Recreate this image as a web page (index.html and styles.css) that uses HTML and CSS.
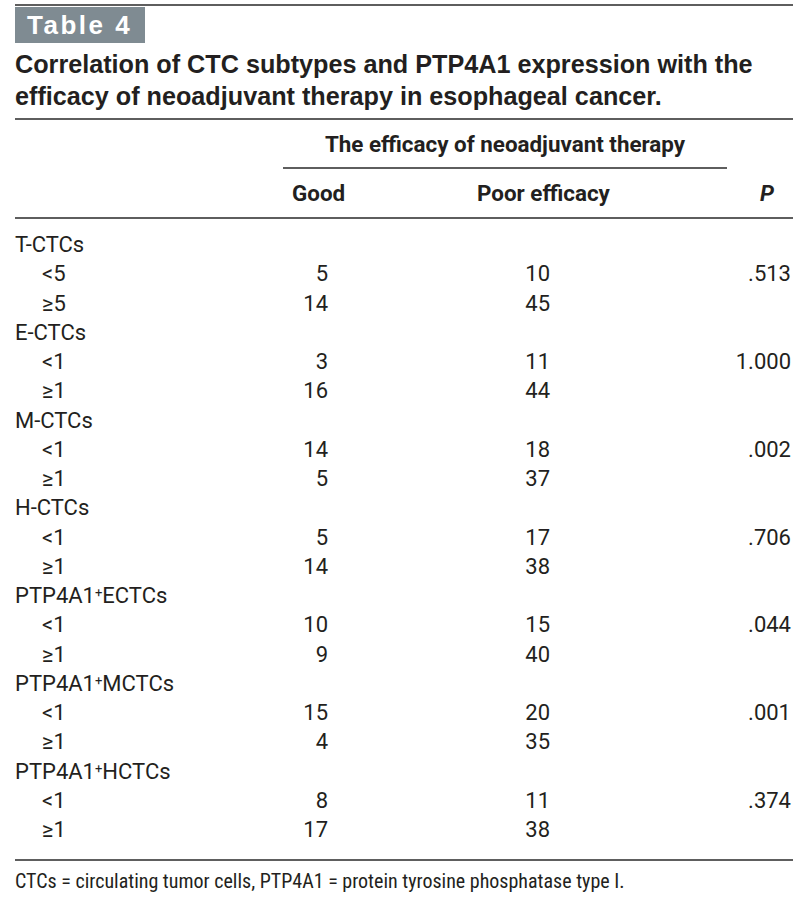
FILE: index.html
```html
<!DOCTYPE html>
<html>
<head>
<meta charset="utf-8">
<link rel="stylesheet" href="styles.css">
</head>
<body>
<div class="wrap">
  <div class="topline"></div>
  <div class="label"><span>Table 4</span></div>
  <h1 class="title">Correlation of CTC subtypes and PTP4A1 expression with the efficacy of neoadjuvant therapy in esophageal cancer.</h1>
  <table class="tbl">
    <colgroup>
      <col class="c1"><col class="c2"><col class="c3"><col class="c4">
    </colgroup>
    <thead>
      <tr class="h1">
        <th></th>
        <th colspan="2" class="span">The efficacy of neoadjuvant therapy</th>
        <th></th>
      </tr>
      <tr class="h2">
        <th></th>
        <th class="hg">Good</th>
        <th class="hp">Poor efficacy</th>
        <th class="hP"><i>P</i></th>
      </tr>
    </thead>
    <tbody>
      <tr><td class="grp">T-CTCs</td><td></td><td></td><td></td></tr>
      <tr><td class="sub">&lt;5</td><td class="ng">5</td><td class="np">10</td><td class="nP">.513</td></tr>
      <tr><td class="sub">≥5</td><td class="ng">14</td><td class="np">45</td><td class="nP"></td></tr>
      <tr><td class="grp">E-CTCs</td><td></td><td></td><td></td></tr>
      <tr><td class="sub">&lt;1</td><td class="ng">3</td><td class="np">11</td><td class="nP">1.000</td></tr>
      <tr><td class="sub">≥1</td><td class="ng">16</td><td class="np">44</td><td class="nP"></td></tr>
      <tr><td class="grp">M-CTCs</td><td></td><td></td><td></td></tr>
      <tr><td class="sub">&lt;1</td><td class="ng">14</td><td class="np">18</td><td class="nP">.002</td></tr>
      <tr><td class="sub">≥1</td><td class="ng">5</td><td class="np">37</td><td class="nP"></td></tr>
      <tr><td class="grp">H-CTCs</td><td></td><td></td><td></td></tr>
      <tr><td class="sub">&lt;1</td><td class="ng">5</td><td class="np">17</td><td class="nP">.706</td></tr>
      <tr><td class="sub">≥1</td><td class="ng">14</td><td class="np">38</td><td class="nP"></td></tr>
      <tr><td class="grp">PTP4A1<sup>+</sup>ECTCs</td><td></td><td></td><td></td></tr>
      <tr><td class="sub">&lt;1</td><td class="ng">10</td><td class="np">15</td><td class="nP">.044</td></tr>
      <tr><td class="sub">≥1</td><td class="ng">9</td><td class="np">40</td><td class="nP"></td></tr>
      <tr><td class="grp">PTP4A1<sup>+</sup>MCTCs</td><td></td><td></td><td></td></tr>
      <tr><td class="sub">&lt;1</td><td class="ng">15</td><td class="np">20</td><td class="nP">.001</td></tr>
      <tr><td class="sub">≥1</td><td class="ng">4</td><td class="np">35</td><td class="nP"></td></tr>
      <tr><td class="grp">PTP4A1<sup>+</sup>HCTCs</td><td></td><td></td><td></td></tr>
      <tr><td class="sub">&lt;1</td><td class="ng">8</td><td class="np">11</td><td class="nP">.374</td></tr>
      <tr class="last"><td class="sub">≥1</td><td class="ng">17</td><td class="np">38</td><td class="nP"></td></tr>
    </tbody>
  </table>
  <p class="foot">CTCs = circulating tumor cells, PTP4A1 = protein tyrosine phosphatase type I.</p>
</div>
</body>
</html>
```

FILE: styles.css
```css
html, body {
  margin: 0;
  padding: 0;
  background: #ffffff;
}
body {
  color: #231f20;
  font-family: "Roboto", "Liberation Sans", Arial, sans-serif;
  font-stretch: 90%;
}
.wrap {
  width: 778px;
  margin-left: 15px;
  padding-top: 4px;
}
.topline {
  height: 2px;
  background: #5e5e5e;
}
.label {
  margin-top: 1px;
  width: 130px;
  height: 36px;
  background: #7f8b92;
  box-sizing: border-box;
  padding-left: 12px;
  display: flex;
  align-items: center;
}
.label span {
  font-family: "Liberation Sans", Arial, sans-serif;
  font-stretch: normal;
  font-weight: bold;
  font-size: 26px;
  color: #ffffff;
  letter-spacing: 2.5px;
}
.title {
  margin: 0;
  padding-top: 5px;
  padding-bottom: 6px;
  font-family: "Liberation Sans", Arial, sans-serif;
  font-stretch: normal;
  font-weight: bold;
  font-size: 25.2px;
  line-height: 32px;
  color: #231f20;
  border-bottom: 2px solid #5e5e5e;
}
.tbl {
  width: 778px;
  border-collapse: collapse;
  table-layout: fixed;
  font-size: 22px;
}
.c1 { width: 268px; }
.c2 { width: 185px; }
.c3 { width: 259px; }
.c4 { width: 66px; }
.tbl th, .tbl td {
  padding: 0;
  white-space: nowrap;
}
.tbl th {
  font-weight: bold;
  text-align: left;
  font-size: 22.4px;
  font-stretch: 90%;
}
.h1 th {
  height: 47px;
  vertical-align: middle;
}
.h1 .span {
  text-align: center;
  border-bottom: 2px solid #5e5e5e;
}
.h2 th {
  height: 48px;
  border-bottom: 2px solid #5e5e5e;
}
.hg, .hp {
  padding-left: 9px !important;
}
.hP {
  padding-left: 33px !important;
}
.hP i {
  font-style: italic;
}
.tbl tbody tr td {
  height: 29.25px;
  line-height: 29.25px;
}
.tbl tbody tr:first-child td {
  padding-top: 11px;
}
.tbl tbody tr.last td {
  padding-bottom: 15px;
}
.tbl tbody tr.last {
  border-bottom: 2px solid #5e5e5e;
}
.grp sup {
  font-size: 13px;
  vertical-align: 6px;
  line-height: 0;
}
.sub {
  padding-left: 27px !important;
}
.ng {
  text-align: right;
  padding-right: 140px !important;
}
.np {
  text-align: right;
  padding-right: 177px !important;
}
.nP {
  text-align: right;
  padding-right: 2px !important;
}
.foot {
  margin: 0;
  padding-top: 8px;
  font-size: 20px;
  font-stretch: 75%;
  line-height: 24px;
}
```
